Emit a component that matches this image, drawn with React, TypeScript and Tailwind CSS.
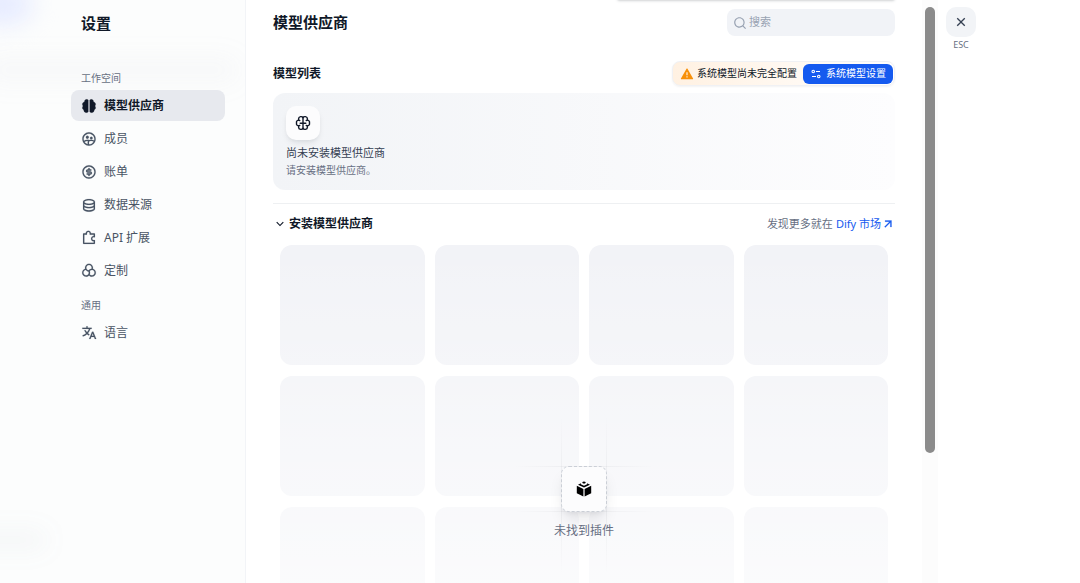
import React from 'react';
import type { IconType } from 'react-icons';
import {
  RiAlertFill,
  RiArrowDownSLine,
  RiArrowRightUpLine,
  RiBrain2Fill,
  RiCloseLine,
  RiColorFilterLine,
  RiDatabase2Line,
  RiEqualizer2Line,
  RiGroup2Line,
  RiMoneyDollarCircleLine,
  RiPuzzle2Line,
  RiSearchLine,
  RiTranslate2,
} from 'react-icons/ri';

interface NavItem {
  label: string;
  icon: IconType;
  active?: boolean;
}

const workspaceItems: NavItem[] = [
  { label: '模型供应商', icon: RiBrain2Fill, active: true },
  { label: '成员', icon: RiGroup2Line },
  { label: '账单', icon: RiMoneyDollarCircleLine },
  { label: '数据来源', icon: RiDatabase2Line },
  { label: 'API 扩展', icon: RiPuzzle2Line },
  { label: '定制', icon: RiColorFilterLine },
];

const generalItems: NavItem[] = [{ label: '语言', icon: RiTranslate2 }];

const NavGroup: React.FC<{ title: string; items: NavItem[] }> = ({ title, items }) => (
  <div>
    <h2 className="px-[10px] text-[10px] leading-4 text-[#676f83]">{title}</h2>
    <ul className="mt-1 flex flex-col gap-[2px]">
      {items.map(({ label, icon: Icon, active }) => (
        <li key={label}>
          <a
            href="#"
            className={
              active
                ? 'flex h-[31px] items-center gap-[7px] rounded-lg bg-[#e7e9ee] px-[10px] text-xs font-bold text-[#101828]'
                : 'flex h-[31px] items-center gap-[7px] rounded-lg px-[10px] text-xs text-[#495464]'
            }
          >
            <Icon className="size-4 stroke-current stroke-[0.2]" />
            {label}
          </a>
        </li>
      ))}
    </ul>
  </div>
);

// Brain outline with a centre line and two inner folds
const BrainIcon: React.FC = () => (
  <svg
    viewBox="0 0 16 16"
    className="size-4"
    fill="none"
    stroke="#101828"
    strokeWidth="1.4"
    strokeLinecap="round"
    strokeLinejoin="round"
  >
    <path d="M8 2.6C7.3 1.2 3.6 1.1 3.6 3.8v1.3C2 5.3 1 6.6 1.6 8c-.6 1.4.4 2.7 2 2.9v1.3c0 2.7 3.7 2.6 4.4 1.2" />
    <path d="M8 2.6c.7-1.4 4.4-1.5 4.4 1.2v1.3c1.6.2 2.6 1.5 2 2.9.6 1.4-.4 2.7-2 2.9v1.3c0 2.7-3.7 2.6-4.4 1.2" />
    <path d="M8 2.6v10.8M5.2 8.2h5.6M3.6 5.1l1.2.5M12.4 5.1l-1.2.5M3.6 10.9l1.2-.5M12.4 10.9l-1.2-.5" />
  </svg>
);

// Package box shown when no plugin is found
const BoxIcon: React.FC = () => (
  <svg viewBox="0 0 16 16" className="size-4" fill="black">
    <path d="M6.4 1.1 8 .4l1.6.7v1L8 2.8l-1.6-.7z" />
    <path d="M4.9 2.2v1L8 4.7l3.1-1.5v-1L14 3.7 8 6.6 2 3.7z" />
    <path d="M.8 4.8 7.4 8v7.6L.8 12.2z" />
    <path d="M15.2 4.8 8.6 8v7.6l6.6-3.4z" />
  </svg>
);

const EmptyPlugins: React.FC = () => (
  <div className="absolute inset-x-0 top-[221px] flex flex-col items-center gap-[9px]">
    <div className="relative flex size-[46px] items-center justify-center rounded-lg border border-dashed border-[#d5d9e0] bg-[#fcfcfd] shadow-lg shadow-gray-900/10">
      <BoxIcon />
      <span className="absolute -top-[52px] -left-px h-[160px] w-px bg-gradient-to-b from-transparent via-gray-900/6 to-transparent" />
      <span className="absolute -top-[52px] -right-px h-[160px] w-px bg-gradient-to-b from-transparent via-gray-900/6 to-transparent" />
      <span className="absolute -top-px -left-[48px] h-px w-[140px] bg-gradient-to-r from-transparent via-gray-900/6 to-transparent" />
      <span className="absolute -bottom-px -left-[48px] h-px w-[140px] bg-gradient-to-r from-transparent via-gray-900/6 to-transparent" />
    </div>
    <p className="text-xs leading-5 text-[#676f83]">未找到插件</p>
  </div>
);

const Sidebar: React.FC = () => (
  <aside className="relative w-[246px] shrink-0 overflow-hidden border-r border-[#f2f4f7] bg-[#fcfdfd] pr-5 pl-[71px]">
    {/* Soft shapes of the page behind */}
    <div className="absolute -top-4 -left-8 h-10 w-16 rounded-full bg-[#e6ebff] blur-md" />
    <div className="absolute top-14 -left-4 h-7 w-64 rounded-full bg-gray-400/5 blur-md" />
    <div className="absolute top-[530px] -left-8 h-5 w-20 rounded-full bg-gray-500/5 blur-md" />

    <div className="relative">
      <h1 className="px-[10px] pt-[11px] text-[15px] leading-6 font-bold text-[#101828]">设置</h1>
      <nav className="mt-[35px] flex flex-col gap-[11px]">
        <NavGroup title="工作空间" items={workspaceItems} />
        <NavGroup title="通用" items={generalItems} />
      </nav>
    </div>
  </aside>
);

const ModelProviders: React.FC = () => (
  <main className="min-w-0 flex-1 overflow-hidden px-[27px]">
    <header className="relative flex items-center justify-between pt-[9px]">
      <div className="absolute -top-1 right-0 h-1 w-[278px] rounded-lg shadow-sm shadow-gray-900/15" />
      <h2 className="text-[15px] leading-[27px] font-bold text-[#101828]">模型供应商</h2>
      <label className="flex h-[27px] w-[168px] items-center gap-[2px] rounded-lg bg-[#f1f3f7] px-[6px]">
        <RiSearchLine className="size-[14px] shrink-0 text-[#98a2b2]" />
        <input
          type="text"
          aria-label="搜索"
          placeholder="搜索"
          className="w-full min-w-0 bg-transparent text-[11px] text-[#101828] outline-none placeholder:text-[#98a2b2]"
        />
      </label>
    </header>

    <div className="mt-[25px] flex items-center justify-between">
      <h3 className="text-xs font-bold text-[#101828]">模型列表</h3>
      <div className="flex h-[25px] items-center gap-[6px] rounded-lg border border-[#f0f1f4] bg-gradient-to-r from-[#fff1e2] to-white pr-px pl-[7px] shadow-xs">
        <span className="flex items-center gap-[3px] text-[10px] text-[#101828]">
          <RiAlertFill className="size-[14px] text-[#f79009]" />
          系统模型尚未完全配置
        </span>
        <button
          type="button"
          className="flex h-5 items-center gap-1 rounded-md bg-[#155aef] px-[7px] text-[10px] text-white"
        >
          <RiEqualizer2Line className="size-3" />
          系统模型设置
        </button>
      </div>
    </div>

    <div className="mt-[7px] h-[97px] rounded-xl bg-gradient-to-r from-[#f2f4f7] to-[#fdfdfe] p-[13px]">
      <div className="flex size-[34px] items-center justify-center rounded-[10px] bg-[#fcfcfd] shadow-md shadow-gray-900/8">
        <BrainIcon />
      </div>
      <p className="mt-1 text-[11px] leading-[18px] text-[#354052]">尚未安装模型供应商</p>
      <p className="text-[10px] leading-4 text-[#676f83]">请安装模型供应商。</p>
    </div>

    <div className="mt-[13px] h-px bg-[#eef0f2]" />

    <div className="mt-[10px] flex h-5 items-center justify-between">
      <button type="button" className="flex items-center gap-[2px] text-xs font-bold text-[#101828]">
        <RiArrowDownSLine className="size-[14px]" />
        安装模型供应商
      </button>
      <div className="flex items-center gap-[3px] text-[11px] text-[#676f83]">
        发现更多就在
        <a href="#" className="flex items-center text-[#155aef]">
          Dify 市场
          <RiArrowRightUpLine className="size-[14px] stroke-current stroke-[0.4]" />
        </a>
      </div>
    </div>

    <div className="relative mt-[11px]">
      <div className="grid grid-cols-4 gap-x-[10px] gap-y-[11px] px-[7px]">
        {Array.from({ length: 16 }, (_, i) => (
          <div key={i} className="h-[120px] rounded-xl bg-[#f2f3f7]" />
        ))}
      </div>
      {/* Fade the placeholders out towards the bottom */}
      <div className="absolute inset-0 bg-gradient-to-b from-transparent to-white" />
      <EmptyPlugins />
    </div>
  </main>
);

const App: React.FC = () => (
  <div className="flex h-screen overflow-hidden bg-white font-['Noto_Sans','Noto_Sans_CJK_SC',sans-serif]">
    <Sidebar />
    <ModelProviders />

    {/* Scrollbar track and thumb */}
    <div className="w-4 shrink-0 bg-[#fcfcfc] px-[3px] pt-[7px]">
      <div className="h-[77.5%] rounded-full bg-[#8b8b8b]" />
    </div>

    <div className="w-[142px] shrink-0 px-2 pt-[7px]">
      <div className="flex w-[30px] flex-col items-center">
        <button
          type="button"
          aria-label="关闭"
          className="flex size-[30px] items-center justify-center rounded-[10px] bg-[#f2f4f7]"
        >
          <RiCloseLine className="size-4 text-[#354052]" />
        </button>
        <span className="mt-[2px] text-[9px] leading-3 text-[#676f83]">ESC</span>
      </div>
    </div>
  </div>
);

export default App;
